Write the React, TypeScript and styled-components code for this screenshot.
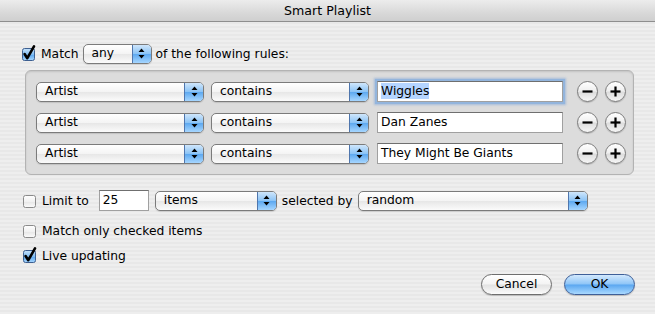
import React, { ReactNode } from 'react';
import styled, { createGlobalStyle } from 'styled-components';

const GlobalStyle = createGlobalStyle`
  html, body {
    margin: 0;
    padding: 0;
    background: #e8e8e8;
  }
  * {
    box-sizing: border-box;
  }
`;

const Window = styled.div`
  width: 655px;
  height: 314px;
  display: flex;
  flex-direction: column;
  font-family: 'DejaVu Sans', 'Liberation Sans', sans-serif;
  font-size: 12.3px;
  color: #000;
  background: repeating-linear-gradient(
    to bottom,
    #eeeeee 0,
    #eeeeee 2px,
    #e8e8e8 2px,
    #e8e8e8 4px
  );
  overflow: hidden;
`;

const TitleBar = styled.div`
  height: 22px;
  flex: none;
  display: flex;
  align-items: center;
  justify-content: center;
  background: linear-gradient(#ececec, #d9d9d9 60%, #cfcfcf);
  border-bottom: 1px solid #8e8e8e;
  font-size: 12.6px;
  padding-bottom: 1px;
`;

const Content = styled.div`
  flex: 1;
  display: flex;
  flex-direction: column;
  padding: 21px 20px 0 21px;
`;

const Line = styled.div<{ $gap?: number }>`
  display: flex;
  align-items: center;
  gap: ${(p) => p.$gap ?? 5}px;
  height: 21px;
  white-space: nowrap;
`;

const CheckLabel = styled.label<{ $mt?: number }>`
  display: flex;
  align-items: center;
  gap: 5px;
  height: 21px;
  margin-top: ${(p) => p.$mt ?? 0}px;
  white-space: nowrap;
`;

const BoxWrap = styled.span`
  width: 15px;
  height: 15px;
  flex: none;
  display: flex;
  svg {
    overflow: visible;
  }
`;

const Checkbox = ({ checked }: { checked?: boolean }) => (
  <BoxWrap>
    <svg width="15" height="15" viewBox="0 0 15 15">
      <defs>
        <linearGradient id="cbBlue" x1="0" y1="0" x2="0" y2="1">
          <stop offset="0" stopColor="#c8e3fb" />
          <stop offset="0.5" stopColor="#7fbcf2" />
          <stop offset="0.52" stopColor="#5aa6ee" />
          <stop offset="1" stopColor="#a9d8ff" />
        </linearGradient>
        <linearGradient id="cbWhite" x1="0" y1="0" x2="0" y2="1">
          <stop offset="0" stopColor="#ffffff" />
          <stop offset="0.5" stopColor="#f1f1f1" />
          <stop offset="0.52" stopColor="#e6e6e6" />
          <stop offset="1" stopColor="#fbfbfb" />
        </linearGradient>
      </defs>
      <rect
        x="1.5"
        y="2.5"
        width="12"
        height="12"
        rx="2"
        fill={checked ? 'url(#cbBlue)' : 'url(#cbWhite)'}
        stroke={checked ? '#3d5f90' : '#8a8a8a'}
      />
      {checked && (
        <path
          d="M3.6 8 L6.3 12.2 L13 0.3"
          fill="none"
          stroke="#000"
          strokeWidth="2.6"
          strokeLinecap="round"
          strokeLinejoin="round"
        />
      )}
    </svg>
  </BoxWrap>
);

const PopupBox = styled.div<{ $w: number }>`
  width: ${(p) => p.$w}px;
  height: 20px;
  flex: none;
  display: flex;
  border: 1px solid #7b7b7b;
  border-radius: 5px;
  background: linear-gradient(#ffffff, #f4f4f4 48%, #e7e7e7 52%, #fbfbfb);
  box-shadow: 0 1px 1px rgba(0, 0, 0, 0.12);
  overflow: hidden;
`;

const PopupLabel = styled.span<{ $pad?: number }>`
  flex: 1;
  display: flex;
  align-items: center;
  padding-left: ${(p) => p.$pad ?? 8}px;
  padding-bottom: 1px;
`;

const PopupArrows = styled.span`
  width: 19px;
  flex: none;
  display: flex;
  align-items: center;
  justify-content: center;
  border-left: 1px solid #4f76ad;
  background: linear-gradient(#cfe6fb, #8cc4f6 48%, #5ea9f0 52%, #a6d6ff);
`;

const Popup = ({ width, pad, children }: { width: number; pad?: number; children: ReactNode }) => (
  <PopupBox $w={width}>
    <PopupLabel $pad={pad}>{children}</PopupLabel>
    <PopupArrows>
      <svg width="7" height="11" viewBox="0 0 7 11">
        <path d="M3.5 0.5 L6.5 4 L0.5 4 Z M3.5 10.5 L6.5 7 L0.5 7 Z" fill="#000" />
      </svg>
    </PopupArrows>
  </PopupBox>
);

const Field = styled.div<{ $w: number; $focused?: boolean }>`
  width: ${(p) => p.$w}px;
  height: 21px;
  flex: none;
  display: flex;
  align-items: center;
  padding: 0 0 1px 3px;
  background: #fff;
  border: 1px solid #a0a0a0;
  border-top-color: #6f6f6f;
  box-shadow: ${(p) =>
    p.$focused ? '0 0 0 2px #93b5dd, 0 0 2px 3px rgba(120, 160, 215, 0.55)' : 'none'};
`;

const Selected = styled.span`
  background: #b5d5ff;
  padding: 1px 0;
`;

const Panel = styled.div`
  margin: 6px 0 0 4px;
  width: 609px;
  height: 105px;
  display: flex;
  flex-direction: column;
  gap: 10px;
  padding: 10px 0 0 10px;
  background: #dcdcdc;
  border: 1px solid #b3b3b3;
  border-radius: 6px;
  box-shadow: inset 0 1px 2px rgba(0, 0, 0, 0.12);
`;

const RuleRow = styled.div`
  display: flex;
  align-items: center;
  height: 21px;
`;

const RoundButton = styled.div<{ $ml: number }>`
  width: 21px;
  height: 21px;
  flex: none;
  margin-left: ${(p) => p.$ml}px;
  border-radius: 50%;
  border: 1px solid #7c7c7c;
  background: linear-gradient(#ffffff, #efefef 48%, #dcdcdc 52%, #f6f6f6);
  box-shadow: 0 1px 1px rgba(0, 0, 0, 0.18);
  display: flex;
  align-items: center;
  justify-content: center;
`;

const Sign = ({ plus }: { plus?: boolean }) => (
  <svg width="11" height="11" viewBox="0 0 11 11">
    <rect x="0.5" y="4.4" width="10" height="2.2" fill="#000" />
    {plus && <rect x="4.4" y="0.5" width="2.2" height="10" fill="#000" />}
  </svg>
);

const Rule = ({ value, focused }: { value: string; focused?: boolean }) => (
  <RuleRow>
    <Popup width={168}>Artist</Popup>
    <Spacer $w={7} />
    <Popup width={158}>contains</Popup>
    <Spacer $w={8} />
    <Field $w={186} $focused={focused}>
      {focused ? <Selected>{value}</Selected> : value}
    </Field>
    <RoundButton $ml={14}>
      <Sign />
    </RoundButton>
    <RoundButton $ml={7}>
      <Sign plus />
    </RoundButton>
  </RuleRow>
);

const Spacer = styled.span<{ $w: number }>`
  width: ${(p) => p.$w}px;
  flex: none;
`;

const Options = styled.div`
  margin-top: 15px;
  display: flex;
  flex-direction: column;
  padding-left: 1px;
`;

const Footer = styled.div`
  margin-top: 8px;
  display: flex;
  justify-content: flex-end;
  gap: 12px;
`;

const PillButton = styled.button<{ $primary?: boolean }>`
  width: 71px;
  height: 21px;
  border-radius: 11px;
  font-family: inherit;
  font-size: 12.3px;
  color: #000;
  padding: 0 0 1px;
  border: 1px solid ${(p) => (p.$primary ? '#3e5f98' : '#6e6e6e')};
  background: ${(p) =>
    p.$primary
      ? 'linear-gradient(#d2e8fd, #8ec5f7 48%, #5aa6f0 52%, #a9d9ff)'
      : 'linear-gradient(#ffffff, #f3f3f3 48%, #e2e2e2 52%, #fbfbfb)'};
  box-shadow: 0 1px 1px rgba(0, 0, 0, 0.2);
`;

export default function App() {
  return (
    <Window>
      <GlobalStyle />
      <TitleBar>Smart Playlist</TitleBar>
      <Content>
        <Line $gap={4}>
          <CheckLabel>
            <Checkbox checked />
            Match
          </CheckLabel>
          <Popup width={69}>any</Popup>
          <span>of the following rules:</span>
        </Line>
        <Panel>
          <Rule value="Wiggles" focused />
          <Rule value="Dan Zanes" />
          <Rule value="They Might Be Giants" />
        </Panel>
        <Options>
          <Line $gap={0}>
            <CheckLabel>
              <Checkbox />
              Limit to
            </CheckLabel>
            <Spacer $w={10} />
            <Field $w={50}>25</Field>
            <Spacer $w={6} />
            <Popup width={122}>items</Popup>
            <Spacer $w={5} />
            <span>selected by</span>
            <Spacer $w={5} />
            <Popup width={230}>random</Popup>
          </Line>
          <CheckLabel $mt={9}>
            <Checkbox />
            Match only checked items
          </CheckLabel>
          <CheckLabel $mt={4}>
            <Checkbox checked />
            Live updating
          </CheckLabel>
        </Options>
        <Footer>
          <PillButton>Cancel</PillButton>
          <PillButton $primary>OK</PillButton>
        </Footer>
      </Content>
    </Window>
  );
}
